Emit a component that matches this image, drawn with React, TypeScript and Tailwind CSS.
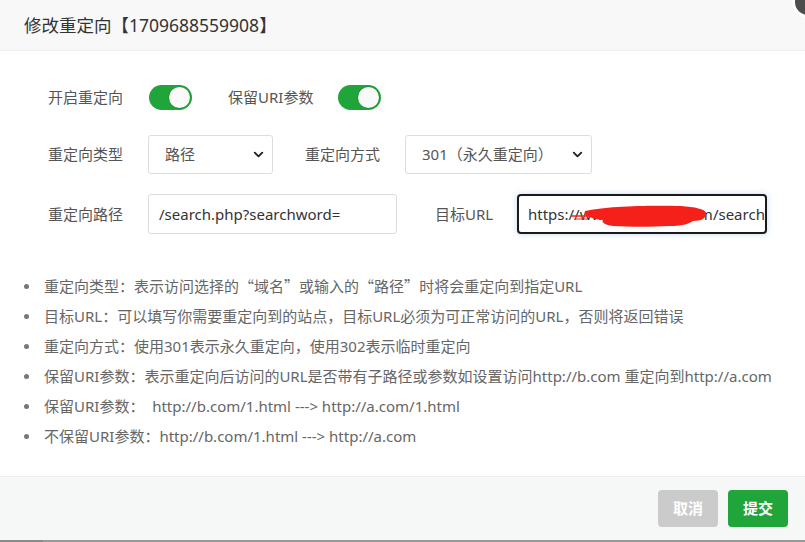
import React from "react";
import { ChevronDown } from "lucide-react";

const font = "font-['Noto_Sans','Noto_Sans_CJK_SC',sans-serif]";

function Toggle() {
  return (
    <div className="w-[43px] h-[25px] rounded-full bg-[#20a53a] flex items-center justify-end pr-[2px] shrink-0">
      <div className="w-[21px] h-[21px] rounded-full bg-[#fafafa] shadow-[0_0_2px_rgba(0,0,0,0.3)]" />
    </div>
  );
}

function Select({ value, width }: { value: string; width: string }) {
  return (
    <div
      className={`${width} h-[39px] border border-[#ddd] rounded-[3px] bg-white flex items-center justify-between pl-[16px] pr-[6px] text-[15px] text-[#555]`}
    >
      <span>{value}</span>
      <ChevronDown size={15} strokeWidth={3} className="text-[#222]" />
    </div>
  );
}

// full-width quotes like the original font
function Q({ children }: { children: React.ReactNode }) {
  return <span className="font-['Noto_Sans_CJK_SC',sans-serif]">{children}</span>;
}

const tips: React.ReactNode[] = [
  <>重定向类型：表示访问选择的<Q>“</Q>域名<Q>”</Q>或输入的<Q>“</Q>路径<Q>”</Q>时将会重定向到指定URL</>,
  "目标URL：可以填写你需要重定向到的站点，目标URL必须为可正常访问的URL，否则将返回错误",
  "重定向方式：使用301表示永久重定向，使用302表示临时重定向",
  "保留URI参数：表示重定向后访问的URL是否带有子路径或参数如设置访问http://b.com 重定向到http://a.com",
  "保留URI参数：  http://b.com/1.html ---> http://a.com/1.html",
  "不保留URI参数：http://b.com/1.html ---> http://a.com",
];

export default function App() {
  return (
    <div className={`w-[805px] h-[542px] relative overflow-hidden bg-white flex flex-col ${font}`}>
      {/* title bar */}
      <div className="h-[51px] shrink-0 bg-[#f8f8f8] border-b border-[#eee] pl-[24px] flex items-center text-[17.5px] text-[#333]">
        修改重定向【1709688559908】
      </div>

      {/* close button, mostly off screen */}
      <div className="absolute left-[792px] top-[-14px] w-[32px] h-[32px] rounded-full bg-[#4d4d4d] border-[3px] border-white" />

      <div className="flex-1 flex flex-col">
        <div className="pl-[48px] pt-[26px] text-[15px] text-[#555]">
          <div className="h-[40px] flex items-center">
            <span className="w-[101px]">开启重定向</span>
            <Toggle />
            <span className="ml-[36px] w-[110px]">保留URI参数</span>
            <Toggle />
          </div>

          <div className="h-[39px] mt-[18px] flex items-center">
            <span className="w-[100px]">重定向类型</span>
            <Select value="路径" width="w-[125px]" />
            <span className="ml-[32px] w-[100px]">重定向方式</span>
            <Select value="301（永久重定向）" width="w-[187px]" />
          </div>

          <div className="h-[40px] mt-[20px] flex items-center">
            <span className="w-[100px]">重定向路径</span>
            <div className="w-[249px] h-[40px] border border-[#ddd] rounded-[3px] flex items-center pl-[10px] text-[#333]">
              /search.php?searchword=
            </div>
            <span className="ml-[38px] w-[82px]">目标URL</span>
            <div className="relative w-[250px] h-[40px] border-2 border-[#1a1a1a] rounded-[4px] shadow-[0_0_6px_rgba(90,150,230,0.35)] flex items-center pl-[9px] overflow-hidden text-[#333] whitespace-nowrap">
              https://www.example.com/search.php?searchword=
              {/* redaction scribble */}
              <svg className="absolute left-[52px] top-[8px]" width="136" height="24" viewBox="0 0 136 24">
                <path d="M0 12 L18 12" stroke="#f5201a" strokeWidth="1.5" fill="none" />
                <path d="M4 15 L16 15" stroke="#f5201a" strokeWidth="1" fill="none" />
                <path
                  d="M14 7 C34 2 80 1 110 2 C124 3 134 5 135 9 C136 14 130 17 122 17 C118 20 110 22 98 22 C80 23 60 23 42 22 C34 21 30 18 32 16 C22 15 12 12 14 7 Z"
                  fill="#f5201a"
                />
              </svg>
            </div>
          </div>
        </div>

        <ul className="mt-[37px] pl-[24px] text-[15px] text-[#666]">
          {tips.map((t, i) => (
            <li key={i} className="h-[30px] flex items-center whitespace-pre">
              <span className="w-[5px] h-[5px] rounded-full bg-[#777] mr-[15px] shrink-0" />
              <span>{t}</span>
            </li>
          ))}
        </ul>
      </div>

      {/* footer */}
      <div className="h-[64px] shrink-0 bg-[#f6f8f8] border-t border-[#eee] flex items-start justify-end gap-[10px] pt-[13px] pr-[17px]">
        <button className="w-[60px] h-[37px] rounded-[4px] bg-[#cbcbcb] text-white font-bold text-[15px]">
          取消
        </button>
        <button className="w-[60px] h-[37px] rounded-[4px] bg-[#20a53a] text-white font-bold text-[15px]">
          提交
        </button>
      </div>
      <div className="h-[2px] shrink-0 flex">
        <div className="w-[43px] bg-[#8a8a8a]" />
        <div className="flex-1 bg-[#999]" />
      </div>
    </div>
  );
}
